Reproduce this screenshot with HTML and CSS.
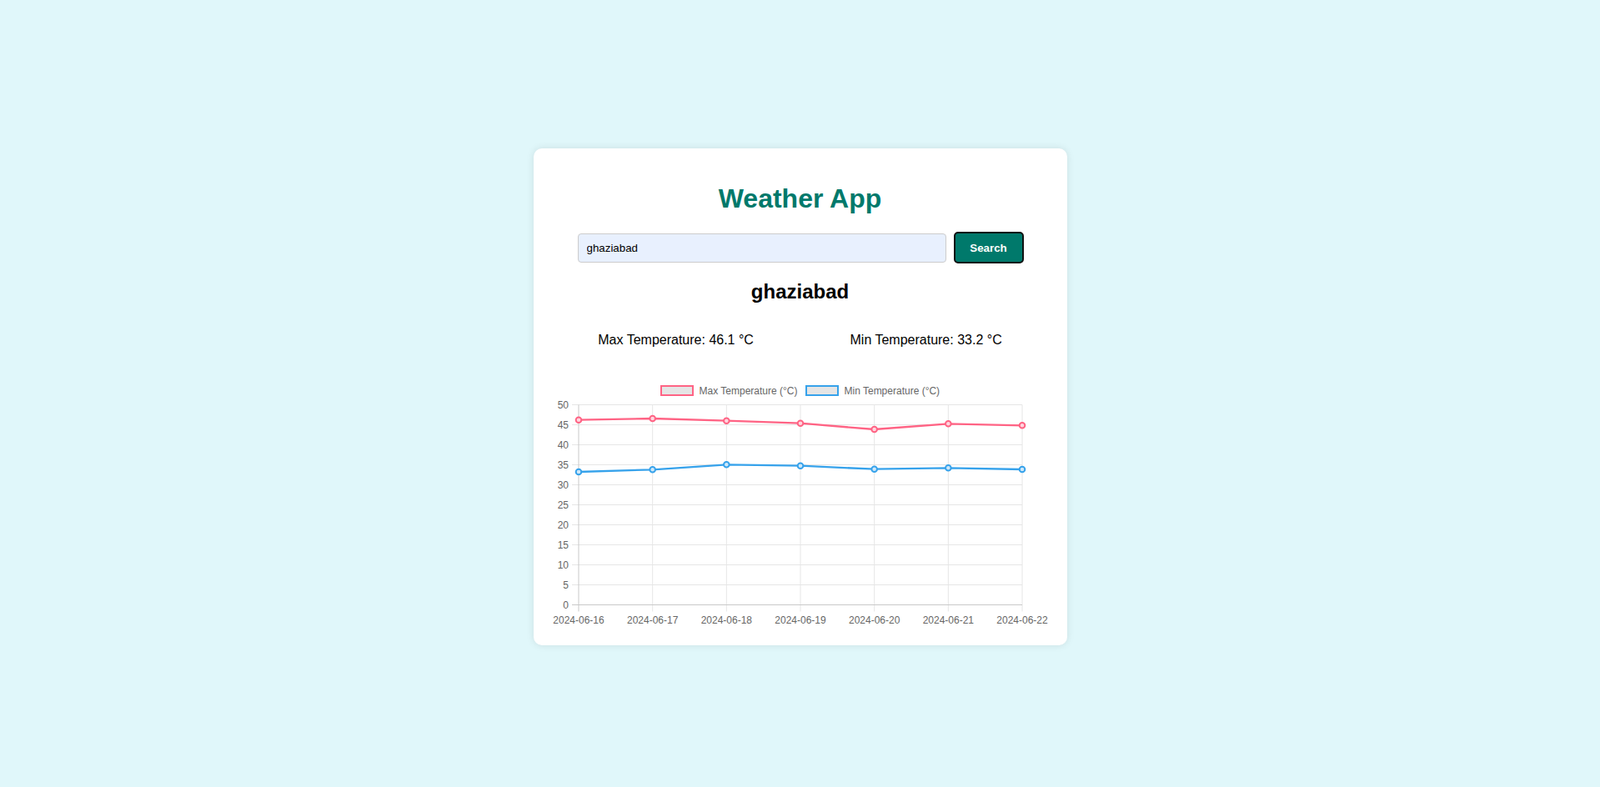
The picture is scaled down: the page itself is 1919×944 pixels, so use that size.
FILE: index.html
```html
<!DOCTYPE html>
<html lang="en">
<head>
<meta charset="utf-8">
<title>Weather App</title>
<link rel="stylesheet" href="styles.css">
</head>
<body>
<div class="card">
  <h1 class="title">Weather App</h1>
  <form class="search">
    <input class="search-input" type="text" value="ghaziabad">
    <button class="search-btn" type="button">Search</button>
  </form>
  <h2 class="city">ghaziabad</h2>
  <div class="temps">
    <p class="temp">Max Temperature: 46.1 °C</p>
    <p class="temp">Min Temperature: 33.2 °C</p>
  </div>
  <div class="chart">
    <svg class="chart-svg" width="600" height="300" viewBox="0 0 600 300">
      <!-- legend -->
      <rect class="legend-box" x="133" y="10" width="38" height="11" stroke="#ff6384"/>
      <text class="lbl" x="178.5" y="20">Max Temperature (°C)</text>
      <rect class="legend-box" x="307" y="10" width="38" height="11" stroke="#36a2eb"/>
      <text class="lbl" x="352.5" y="20">Min Temperature (°C)</text>

      <!-- horizontal grid -->
      <g class="grid">
        <line x1="26" y1="32.5" x2="566" y2="32.5"/>
        <line x1="26" y1="56.5" x2="566" y2="56.5"/>
        <line x1="26" y1="80.5" x2="566" y2="80.5"/>
        <line x1="26" y1="104.5" x2="566" y2="104.5"/>
        <line x1="26" y1="128.5" x2="566" y2="128.5"/>
        <line x1="26" y1="152.5" x2="566" y2="152.5"/>
        <line x1="26" y1="176.5" x2="566" y2="176.5"/>
        <line x1="26" y1="200.5" x2="566" y2="200.5"/>
        <line x1="26" y1="224.5" x2="566" y2="224.5"/>
        <line x1="26" y1="248.5" x2="566" y2="248.5"/>
      </g>
      <!-- vertical grid -->
      <g class="grid">
        <line x1="122.67" y1="32.5" x2="122.67" y2="280.5"/>
        <line x1="211.33" y1="32.5" x2="211.33" y2="280.5"/>
        <line x1="300" y1="32.5" x2="300" y2="280.5"/>
        <line x1="388.67" y1="32.5" x2="388.67" y2="280.5"/>
        <line x1="477.33" y1="32.5" x2="477.33" y2="280.5"/>
        <line x1="566" y1="32.5" x2="566" y2="280.5"/>
      </g>
      <!-- axes -->
      <g class="axis">
        <line x1="34" y1="32.5" x2="34" y2="280.5"/>
        <line x1="26" y1="272.5" x2="566" y2="272.5"/>
      </g>

      <!-- y labels -->
      <g class="lbl ylbl">
        <text x="22" y="36.8">50</text>
        <text x="22" y="60.8">45</text>
        <text x="22" y="84.8">40</text>
        <text x="22" y="108.8">35</text>
        <text x="22" y="132.8">30</text>
        <text x="22" y="156.8">25</text>
        <text x="22" y="180.8">20</text>
        <text x="22" y="204.8">15</text>
        <text x="22" y="228.8">10</text>
        <text x="22" y="252.8">5</text>
        <text x="22" y="276.8">0</text>
      </g>
      <!-- x labels -->
      <g class="lbl xlbl">
        <text x="34" y="294.5">2024-06-16</text>
        <text x="122.67" y="294.5">2024-06-17</text>
        <text x="211.33" y="294.5">2024-06-18</text>
        <text x="300" y="294.5">2024-06-19</text>
        <text x="388.67" y="294.5">2024-06-20</text>
        <text x="477.33" y="294.5">2024-06-21</text>
        <text x="566" y="294.5">2024-06-22</text>
      </g>

      <!-- max series -->
      <polyline class="series series-max" points="34,50.7 122.67,49 211.33,51.7 300,54.7 388.67,62 477.33,55.3 566,57.3"/>
      <g class="pts pts-max">
        <circle cx="34" cy="50.7" r="3.3"/>
        <circle cx="122.67" cy="49" r="3.3"/>
        <circle cx="211.33" cy="51.7" r="3.3"/>
        <circle cx="300" cy="54.7" r="3.3"/>
        <circle cx="388.67" cy="62" r="3.3"/>
        <circle cx="477.33" cy="55.3" r="3.3"/>
        <circle cx="566" cy="57.3" r="3.3"/>
      </g>
      <!-- min series -->
      <polyline class="series series-min" points="34,113 122.67,110.3 211.33,104.3 300,105.7 388.67,109.7 477.33,108.3 566,110"/>
      <g class="pts pts-min">
        <circle cx="34" cy="113" r="3.3"/>
        <circle cx="122.67" cy="110.3" r="3.3"/>
        <circle cx="211.33" cy="104.3" r="3.3"/>
        <circle cx="300" cy="105.7" r="3.3"/>
        <circle cx="388.67" cy="109.7" r="3.3"/>
        <circle cx="477.33" cy="108.3" r="3.3"/>
        <circle cx="566" cy="110" r="3.3"/>
      </g>
    </svg>
  </div>
</div>
</body>
</html>
```
FILE: styles.css
```css
* { box-sizing: border-box; }

html, body {
  margin: 0;
}

body {
  min-height: 100vh;
  padding-top: 8px;
  background: #e0f7fa;
  font-family: "Liberation Sans", Arial, sans-serif;
  display: flex;
  justify-content: center;
  align-items: center;
}

.card {
  width: 640px;
  background: #ffffff;
  border-radius: 10px;
  padding: 20px 20px 21px;
  box-shadow: 0 0 10px rgba(0, 0, 0, 0.1);
  text-align: center;
}

.title {
  font-size: 32px;
  font-weight: bold;
  color: #00796b;
  margin: 22px 0 21px;
}

.search {
  display: flex;
  justify-content: center;
  align-items: center;
  gap: 9px;
  padding-left: 1px;
}

.search-input {
  width: 442px;
  height: 35px;
  padding: 0 10px;
  border: 1px solid #cccccc;
  border-radius: 4px;
  background: #e8f0fe;
  font-family: "Liberation Sans", Arial, sans-serif;
  font-size: 13.33px;
  color: #000;
  outline: none;
}

.search-btn {
  width: 84px;
  height: 38px;
  border: 2px solid #111111;
  border-radius: 5px;
  background: #00796b;
  color: #ffffff;
  font-family: "Liberation Sans", Arial, sans-serif;
  font-size: 13.33px;
  font-weight: bold;
  cursor: pointer;
}

.city {
  font-size: 24px;
  font-weight: bold;
  margin: 20px 0 0;
  color: #000;
}

.temps {
  display: flex;
  justify-content: space-around;
  margin: 35px 0 36px;
}

.temp {
  margin: 0;
  font-size: 16px;
  color: #000;
}

.chart {
  height: 300px;
}

.chart-svg {
  display: block;
}

.lbl {
  font-family: "Liberation Sans", Arial, sans-serif;
  font-size: 12px;
  fill: #666666;
}

.ylbl { text-anchor: end; }
.xlbl { text-anchor: middle; }

.legend-box {
  fill: #e5e5e5;
  stroke-width: 2;
}

.grid line {
  stroke: #e6e6e6;
  stroke-width: 1;
}

.axis line {
  stroke: #c9c9c9;
  stroke-width: 1;
}

.series {
  fill: none;
  stroke-width: 2.3;
  stroke-linejoin: round;
}

.series-max { stroke: #ff6384; }
.series-min { stroke: #36a2eb; }

.pts circle {
  stroke-width: 2;
}

.pts-max circle {
  stroke: #ff6384;
  fill: #ffd6df;
}

.pts-min circle {
  stroke: #36a2eb;
  fill: #cfe8f9;
}
```
